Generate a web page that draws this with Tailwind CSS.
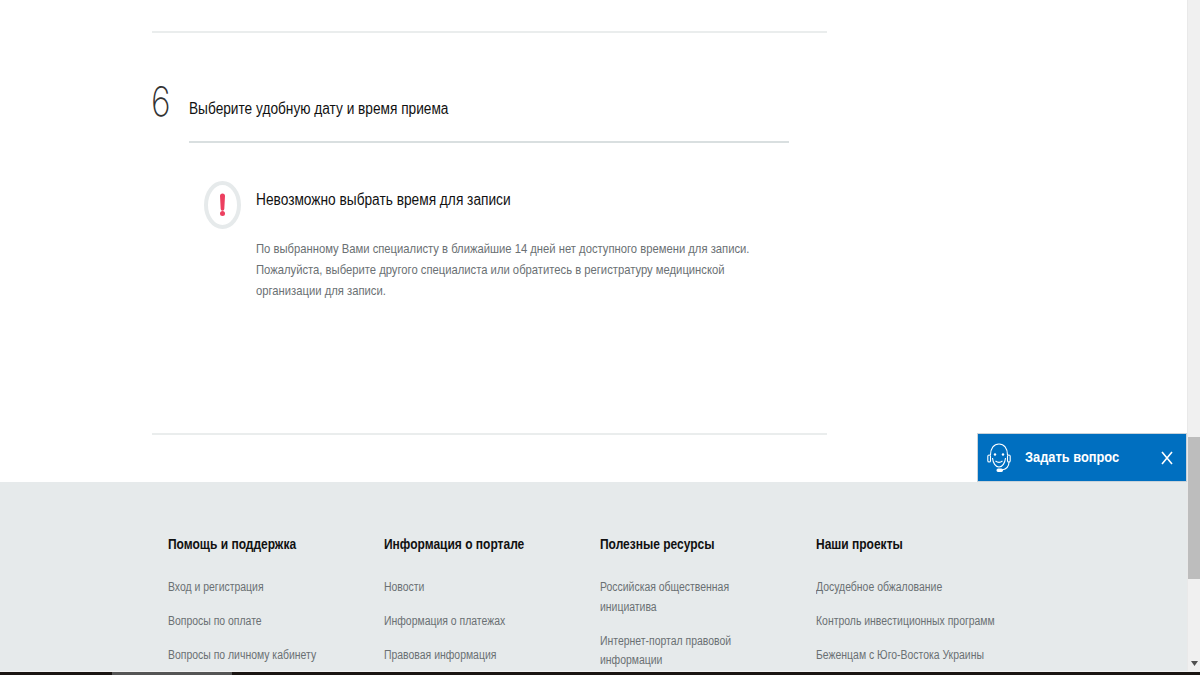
<!DOCTYPE html>
<html lang="ru">
<head>
    <meta charset="UTF-8">
    <meta name="viewport" content="width=device-width, initial-scale=1.0">
    <title>Запись на прием</title>
    <script src="https://cdn.jsdelivr.net/npm/@tailwindcss/browser@4"></script>
</head>
<body class="h-[675px] overflow-hidden bg-white flex flex-col font-['Liberation_Sans',sans-serif]">
    <div class="flex h-[671px] relative">
        <div class="w-[1187px] flex flex-col">
            <!-- Step content -->
            <main class="h-[482px] pl-[152px] pt-[31px] relative">
                <div class="w-[675px] border-t-2 border-[#eaeded]"></div>
                <section class="flex mt-[46px]">
                    <span class="w-[37px] -ml-[1px] mr-[1px] origin-left scale-x-[.82] text-[41px] leading-[44px] font-['Inter',sans-serif] font-extralight text-[#333333]">6</span>
                    <div class="w-[600px]">
                        <h2 class="pt-[20px] h-[64px] text-[16px] leading-[20px] text-[#111111] border-b-2 border-[#d9dfe0]">
                            <span class="block origin-left scale-x-[.855] whitespace-nowrap">Выберите удобную дату и время приема</span>
                        </h2>
                        <div class="flex mt-[38px] pl-[15px]">
                            <svg class="w-[38px] h-[48px] shrink-0" viewBox="0 0 38 48" fill="none">
                                <ellipse cx="18.500" cy="24" rx="16.500" ry="22" stroke="#e6eaeb" stroke-width="4"/>
                                <path d="M16 15a2.500 2.500 0 0 1 5 0l-.7 13a1.800 1.800 0 0 1-3.600 0z" fill="#ec3f5f"/>
                                <circle cx="18.500" cy="32.500" r="2.500" fill="#ec3f5f"/>
                            </svg>
                            <div class="ml-[14px]">
                                <h3 class="mt-[9px] text-[16px] leading-[20px] text-[#111111] origin-left scale-x-[.857] whitespace-nowrap">Невозможно выбрать время для записи</h3>
                                <p class="mt-[28px] text-[13px] leading-[21px] text-[#6a7073] origin-left scale-x-[.865] whitespace-nowrap">По выбранному Вами специалисту в ближайшие 14 дней нет доступного времени для записи.<br>Пожалуйста, выберите другого специалиста или обратитесь в регистратуру медицинской<br>организации для записи.</p>
                            </div>
                        </div>
                    </div>
                </section>
                <div class="absolute left-[152px] top-[433px] w-[675px] border-t-2 border-[#eaeded]"></div>
            </main>

            <!-- Footer -->
            <footer class="flex-1 bg-[#e6eaeb] pl-[168px] pt-[53px] grid grid-cols-[215.5px_216.5px_215.5px_216px] content-start overflow-hidden">
                <div>
                    <h4 class="text-[14px] leading-[18px] font-bold text-[#111111] mb-[25px] origin-left scale-x-[.857] whitespace-nowrap">Помощь и поддержка</h4>
                    <ul class="flex flex-col gap-[14.5px] text-[12px] leading-[19.5px] text-[#6a7073] origin-left scale-x-[.87] whitespace-nowrap">
                        <li>Вход и регистрация</li>
                        <li>Вопросы по оплате</li>
                        <li>Вопросы по личному кабинету</li>
                    </ul>
                </div>
                <div>
                    <h4 class="text-[14px] leading-[18px] font-bold text-[#111111] mb-[25px] origin-left scale-x-[.857] whitespace-nowrap">Информация о портале</h4>
                    <ul class="flex flex-col gap-[14.5px] text-[12px] leading-[19.5px] text-[#6a7073] origin-left scale-x-[.87] whitespace-nowrap">
                        <li>Новости</li>
                        <li>Информация о платежах</li>
                        <li>Правовая информация</li>
                    </ul>
                </div>
                <div>
                    <h4 class="text-[14px] leading-[18px] font-bold text-[#111111] mb-[25px] origin-left scale-x-[.857] whitespace-nowrap">Полезные ресурсы</h4>
                    <ul class="flex flex-col gap-[14.5px] text-[12px] leading-[19.5px] text-[#6a7073] origin-left scale-x-[.87] whitespace-nowrap">
                        <li>Российская общественная<br>инициатива</li>
                        <li>Интернет-портал правовой<br>информации</li>
                    </ul>
                </div>
                <div>
                    <h4 class="text-[14px] leading-[18px] font-bold text-[#111111] mb-[25px] origin-left scale-x-[.857] whitespace-nowrap">Наши проекты</h4>
                    <ul class="flex flex-col gap-[14.5px] text-[12px] leading-[19.5px] text-[#6a7073] origin-left scale-x-[.87] whitespace-nowrap">
                        <li>Досудебное обжалование</li>
                        <li>Контроль инвестиционных программ</li>
                        <li>Беженцам с Юго-Востока Украины</li>
                    </ul>
                </div>
            </footer>
        </div>

        <!-- Scrollbar -->
        <div class="w-[13px] bg-[#f0f0f0] flex flex-col items-center border-l border-[#e9e9e9]">
            <div class="h-[437px]"></div>
            <div class="w-full h-[142px] bg-[#bdbdbd]"></div>
            <svg class="mt-auto mb-[5px] w-[7px] h-[5px]" viewBox="0 0 7 5"><path d="M0 0h7L3.500 5z" fill="#505050"/></svg>
        </div>

        <!-- Chat widget -->
        <div class="absolute left-[977px] top-[433px] w-[210px] h-[49px] bg-[#006fc0] border border-[#c9d3da] flex items-center text-white">
            <svg class="ml-[9px] w-[24px] h-[30px] shrink-0" viewBox="0 0 24 30" fill="none" stroke="white" stroke-width="1.100">
                <path d="M3.500 12C3.500 5 7 1 12 1s8.500 4 8.500 11"/>
                <rect x=".8" y="12" width="2.700" height="7" rx="1.300"/>
                <rect x="20.500" y="12" width="2.700" height="7" rx="1.300"/>
                <path d="M5.500 15c.5 5 3 9 6.500 9s6-4 6.500-9"/>
                <path d="M22 19c0 4-2.500 7-7 8"/>
                <rect x="10" y="26" width="5.500" height="2.500" rx="1.200" fill="white"/>
                <circle cx="8" cy="11.500" r="1.200" fill="white" stroke="none"/>
                <circle cx="16" cy="11.500" r="1.200" fill="white" stroke="none"/>
                <path d="M8.500 18c2 1.500 5 1.500 7 0"/>
            </svg>
            <span class="ml-[14px] -mt-[1px] text-[15px] font-bold origin-left scale-x-[.855] whitespace-nowrap">Задать вопрос</span>
            <svg class="ml-auto mr-[13px] w-[12px] h-[14px]" viewBox="0 0 12 14" fill="none" stroke="white" stroke-width="1.600"><path d="M1 1l10 12M11 1L1 13"/></svg>
        </div>
    </div>

    <!-- Bottom strip of the capture -->
    <div class="h-[4px] bg-[#1a1512] pl-[112px] border-t border-[#f2f2f2]">
        <div class="w-[120px] h-full bg-[#555555]"></div>
    </div>
</body>
</html>
